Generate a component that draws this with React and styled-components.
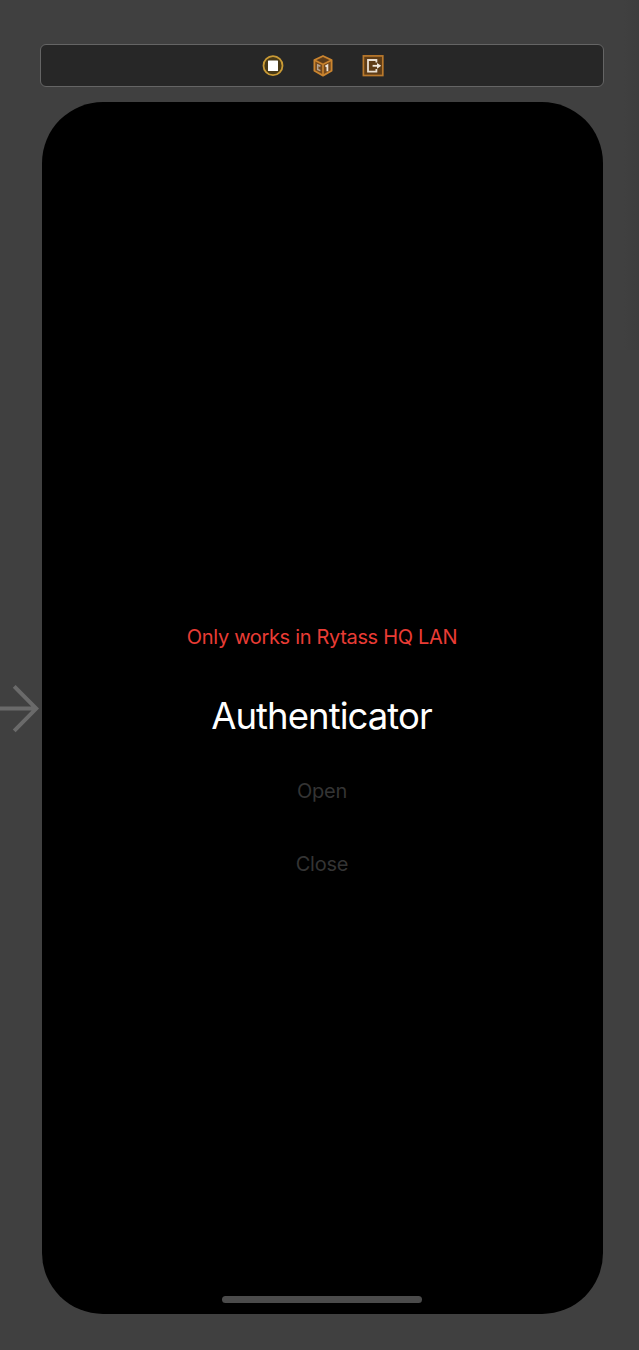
import React from 'react';
import styled, { createGlobalStyle } from 'styled-components';

const ControllerIcon = () => (
  <Icon viewBox="0 0 24 24">
    <circle cx="12" cy="11.7" r="9.5" fill="#493a17" stroke="#c99a35" strokeWidth="1.8" />
    <rect x="7" y="6.5" width="10" height="10.4" rx="0.5" fill="#fff" />
  </Icon>
);

const ResponderIcon = () => (
  <Icon viewBox="0 0 24 24">
    <path
      d="M12 2 20.6 6v10.8L12 21.6l-8.6-4.8V6z"
      fill="#74491d"
      stroke="#cb852f"
      strokeWidth="1.8"
      strokeLinejoin="round"
    />
    <path d="M12 3.6 17.8 6.3 12 9l-5.8-2.7z" fill="#5c3c1a" />
    <path
      d="M3.6 6.3l8.4 4.1 8.4-4.1M12 10.4V21"
      fill="none"
      stroke="#cb852f"
      strokeWidth="1.6"
    />
    <path
      d="M9.4 12.2 6.7 11v4.4l2.7 1.2"
      fill="none"
      stroke="#b5a594"
      strokeWidth="1.5"
    />
    <path
      d="M14.4 12.6l2-1.2v5.8"
      fill="none"
      stroke="#eee4d8"
      strokeWidth="1.8"
    />
  </Icon>
);

const ExitIcon = () => (
  <Icon viewBox="0 0 24 24">
    <rect x="2.4" y="1.9" width="19.4" height="19.6" fill="#5e3c17" stroke="#b9792c" strokeWidth="1.7" />
    <path
      d="M15.4 8.6V6H7v11.6h8.4V15"
      fill="none"
      stroke="#e9dfd2"
      strokeWidth="1.8"
    />
    <path d="M11.6 11.8H17" fill="none" stroke="#f1e9df" strokeWidth="1.8" />
    <path d="M16 8.9 20.2 11.8 16 14.7z" fill="#f1e9df" />
  </Icon>
);

const App = () => {
  return (
    <>
      <GlobalStyle />
      <Canvas>
        <SceneDock>
          <ControllerIcon />
          <ResponderIcon />
          <ExitIcon />
        </SceneDock>
        <Scene>
          <EntryArrow viewBox="0 0 42 50">
            <path d="M0 24.6h36M14.2 2.4 36.2 24.6 14.2 46.8" />
          </EntryArrow>
          <Device>
            <Notice>Only works in Rytass HQ LAN</Notice>
            <Title>Authenticator</Title>
            <Action>Open</Action>
            <Action>Close</Action>
            <HomeIndicator />
          </Device>
        </Scene>
      </Canvas>
    </>
  );
};

export default App;

//styles

const GlobalStyle = createGlobalStyle`
  * {
    box-sizing: border-box;
  }
  body {
    margin: 0;
    background: #404040;
    font-family: Inter, 'Liberation Sans', sans-serif;
  }
`;

const Canvas = styled.main`
  width: 639px;
  height: 1350px;
  padding-top: 44px;
  overflow: hidden;
  background: linear-gradient(to right, transparent 624px, #3d3d3d 639px) top /
    100% 350px no-repeat #404040;
`;

const SceneDock = styled.div`
  display: flex;
  align-items: center;
  justify-content: center;
  gap: 26px;
  width: 564px;
  height: 43px;
  margin-left: 40px;
  padding-left: 2px;
  border: 1px solid #656565;
  border-radius: 6px;
  background: #272727;
`;

const Icon = styled.svg`
  display: block;
  width: 24px;
  height: 24px;
`;

const Scene = styled.div`
  display: flex;
  align-items: center;
  margin-top: 15px;
`;

const EntryArrow = styled.svg`
  flex: none;
  width: 42px;
  height: 50px;
  margin-top: 2px;
  fill: none;
  stroke: #6a6a6a;
  stroke-width: 4;
`;

const Device = styled.section`
  display: flex;
  flex-direction: column;
  align-items: center;
  width: 561px;
  height: 1212px;
  padding: 522px 1px 11px 0;
  border-radius: 61px;
  background: #000;
`;

const Notice = styled.p`
  margin: 0;
  color: #e93c35;
  font-size: 20px;
  letter-spacing: -0.33px;
  line-height: 26px;
  white-space: nowrap;
`;

const Title = styled.h1`
  margin: 42px 1px 0 0;
  color: #fff;
  font-size: 36.5px;
  font-weight: 400;
  letter-spacing: -0.95px;
  line-height: 49px;
`;

const Action = styled.button`
  margin: 37px 0 0;
  padding: 0;
  border: 0;
  background: none;
  color: #343434;
  font: inherit;
  font-size: 20px;
  letter-spacing: -0.2px;
  line-height: 26px;

  & + & {
    margin-top: 47px;
  }
`;

const HomeIndicator = styled.div`
  width: 200px;
  height: 7px;
  margin-top: auto;
  border-radius: 4px;
  background: #4b4b4b;
`;
